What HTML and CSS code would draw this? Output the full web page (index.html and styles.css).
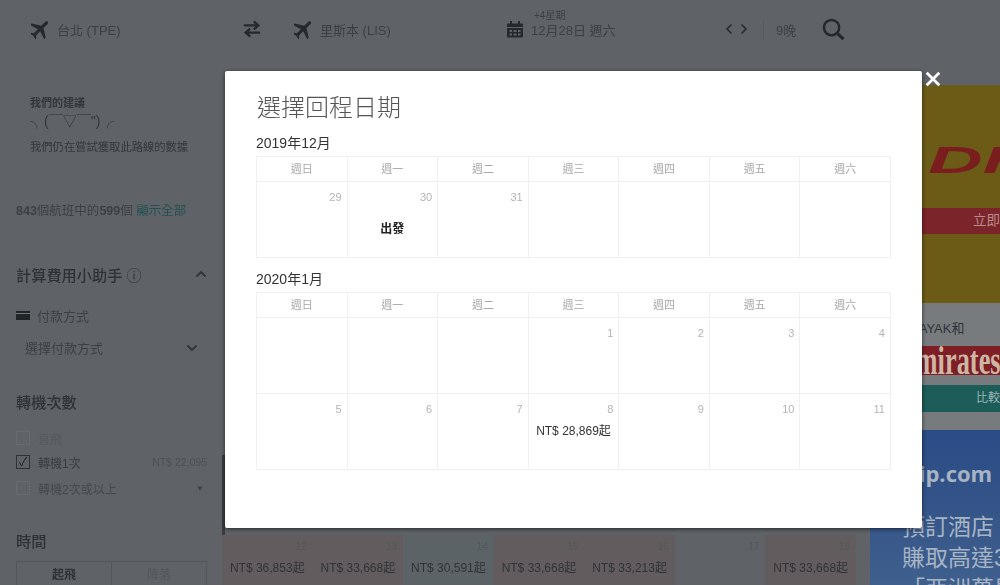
FILE: index.html
```html
<!DOCTYPE html>
<html lang="zh-Hant">
<head>
	<meta charset="UTF-8">
	<meta name="viewport" content="width=device-width, initial-scale=1.0">
	<title>選擇回程日期</title>
	<link rel="stylesheet" href="styles.css">
</head>
<body>
	<div class="page">
		<header class="topbar">
			<div class="place">
				<svg class="icon plane" viewBox="3 3 18 18"><path d="M21 16v-2l-8-5V3.500c0-.83-.67-1.500-1.500-1.500S10 2.670 10 3.500V9l-8 5v2l8-2.500V19l-2 1.500V22l3.500-1 3.500 1v-1.500L13 19v-5.500l8 2.500z" transform="rotate(45 12 12)"/></svg>
				<span>台北 (TPE)</span>
			</div>
			<div class="swap">
				<svg class="icon" viewBox="0 0 20 20"><path class="line" d="M1 6h16M12 1.500 17 6l-5 4.500M19 14H3M8 9.500 3 14l5 4.500"/></svg>
			</div>
			<div class="place">
				<svg class="icon plane" viewBox="3 3 18 18"><path d="M21 16v-2l-8-5V3.500c0-.83-.67-1.500-1.500-1.500S10 2.670 10 3.500V9l-8 5v2l8-2.500V19l-2 1.500V22l3.500-1 3.500 1v-1.500L13 19v-5.500l8 2.500z" transform="rotate(45 12 12)"/></svg>
				<span>里斯本 (LIS)</span>
			</div>
			<div class="date">
				<svg class="icon" viewBox="0 0 18 18"><path d="M1 4.500c0-.6.400-1 1-1h2V1h2v2.500h6V1h2v2.500h2c.6 0 1 .4 1 1V7H1zM1 8h16v8.500c0 .6-.4 1-1 1H2c-.6 0-1-.4-1-1zm2.500 2v2h2.500v-2zm4 0v2h3v-2zm4.500 0v2h2.500v-2zm-8.500 3.500v2h2.500v-2zm4 0v2h3v-2zm4.500 0v2h2.500v-2z" fill-rule="evenodd"/></svg>
				<div class="date-text">
					<small>+4星期</small>
					<span>12月28日 週六</span>
				</div>
			</div>
			<div class="arrows">
				<svg class="chev" viewBox="0 0 8 12"><path class="thin" d="M6.500 1.500 2 6l4.500 4.500"/></svg>
				<svg class="chev" viewBox="0 0 8 12"><path class="thin" d="M1.500 1.500 6 6l-4.500 4.500"/></svg>
			</div>
			<div class="nights">9晚</div>
			<svg class="search" viewBox="0 0 24 24"><circle class="line" cx="10" cy="10" r="8"/><path class="line heavy" d="m16 16 6.500 6"/></svg>
		</header>

		<div class="layout">
			<aside class="sidebar">
				<div class="advice">
					<div class="advice-title">我們的建議</div>
					<div class="kaomoji">╮(￣▽￣")╭</div>
					<div>我們仍在嘗試獲取此路線的數據</div>
				</div>
				<div class="count"><b>843</b>個航班中的<b>599</b>個 <a>顯示全部</a></div>

				<div class="heading first">
					<span>計算費用小助手 <i>ⓘ</i></span>
					<svg class="fold" viewBox="0 0 12 8"><path class="thick" d="M1.500 6.500 6 2l4.500 4.500"/></svg>
				</div>
				<div class="pay"><span class="card"></span>付款方式</div>
				<div class="select">
					<span>選擇付款方式</span>
					<svg class="fold" viewBox="0 0 12 8"><path class="thick" d="M1.500 1.500 6 6l4.500-4.500"/></svg>
				</div>

				<div class="heading stops">轉機次數</div>
				<div class="check off"><span class="box"></span>直飛</div>
				<div class="check"><span class="box on">✓</span>轉機1次<em>NT$ 22,095</em></div>
				<div class="check mid"><span class="box"></span>轉機2次或以上<em class="pin">▼</em></div>

				<div class="heading time">時間</div>
				<div class="tabs">
					<div class="tab active">起飛</div>
					<div class="tab">降落</div>
				</div>
			</aside>

			<main class="main">
				<div class="grid-edge"></div>
				<div class="strip">
					<div class="day tone-a"><span>12</span>NT$ 36,853起</div>
					<div class="day tone-a"><span>13</span>NT$ 33,668起</div>
					<div class="day tone-b"><span>14</span>NT$ 30,591起</div>
					<div class="day tone-a"><span>15</span>NT$ 33,668起</div>
					<div class="day tone-a"><span>16</span>NT$ 33,213起</div>
					<div class="day"><span>17</span></div>
					<div class="day tone-a"><span>18</span>NT$ 33,668起</div>
				</div>
			</main>

			<aside class="ads">
				<div class="ad-dhl">
					<div class="dhl-logo">DHL</div>
					<div class="dhl-btn">立即</div>
				</div>
				<div class="ad-kayak">
					<div class="kayak-text">KAYAK和</div>
					<div class="emirates"><span>Emirates</span></div>
					<div class="compare">比較</div>
				</div>
				<div class="ad-trip">
					<div class="trip-logo">Trip.com</div>
					<div class="trip-text">預訂酒店<br>賺取高達3<br>「亞洲萬里</div>
				</div>
			</aside>
		</div>
	</div>

	<div class="modal">
		<svg class="close" viewBox="0 0 14 14"><path d="M1.500 1.500l11 11M12.500 1.500l-11 11"/></svg>
		<h1>選擇回程日期</h1>

		<h2>2019年12月</h2>
		<div class="cal">
			<div class="wd">週日</div><div class="wd">週一</div><div class="wd">週二</div><div class="wd">週三</div><div class="wd">週四</div><div class="wd">週五</div><div class="wd">週六</div>
			<div class="cell"><span>29</span></div>
			<div class="cell"><span>30</span><b>出發</b></div>
			<div class="cell"><span>31</span></div>
			<div class="cell"></div><div class="cell"></div><div class="cell"></div><div class="cell"></div>
		</div>

		<h2 class="second">2020年1月</h2>
		<div class="cal">
			<div class="wd">週日</div><div class="wd">週一</div><div class="wd">週二</div><div class="wd">週三</div><div class="wd">週四</div><div class="wd">週五</div><div class="wd">週六</div>
			<div class="cell"></div><div class="cell"></div><div class="cell"></div>
			<div class="cell"><span>1</span></div>
			<div class="cell"><span>2</span></div>
			<div class="cell"><span>3</span></div>
			<div class="cell"><span>4</span></div>
			<div class="cell"><span>5</span></div>
			<div class="cell"><span>6</span></div>
			<div class="cell"><span>7</span></div>
			<div class="cell"><span>8</span><p>NT$ 28,869起</p></div>
			<div class="cell"><span>9</span></div>
			<div class="cell"><span>10</span></div>
			<div class="cell"><span>11</span></div>
		</div>
	</div>
</body>
</html>
```

FILE: styles.css
```css
body {
	margin: 0;
	height: 585px;
	overflow: hidden;
	background: #5f6367;
	color: #303336;
	font-family: 'Liberation Sans', 'Noto Sans CJK TC', sans-serif;
	font-size: 13px;
}
svg {
	display: block;
	flex: none;
}
.page {
	height: 585px;
	display: flex;
	flex-direction: column;
	filter: blur(.6px);
}
.line, .thin, .thick {
	fill: none;
	stroke: #26292c;
	stroke-width: 2.6;
}
.thin {
	stroke-width: 1.5;
}
.thick {
	stroke: #303336;
	stroke-width: 1.8;
}
.heavy {
	stroke-width: 3.4;
}

/* top bar */
.topbar {
	height: 60px;
	padding: 0 0 2px 31px;
	box-sizing: border-box;
	display: flex;
	align-items: center;
	flex: none;
}
.icon {
	width: 18px;
	height: 18px;
	fill: #26292c;
}
.plane {
	width: 19px;
	height: 19px;
}
.place {
	width: 212px;
	display: flex;
	align-items: center;
	gap: 7px;
	color: #3c4043;
}
.swap {
	width: 51px;
}
.date {
	width: 219px;
	display: flex;
	align-items: center;
	gap: 7px;
	color: #3c4043;
}
.date-text {
	position: relative;
}
.date-text small {
	position: absolute;
	left: 3px;
	top: -13px;
	font-size: 10px;
	white-space: nowrap;
}
.arrows {
	width: 38px;
	display: flex;
	gap: 7px;
}
.chev {
	width: 8px;
	height: 12px;
}
.nights {
	width: 46px;
	padding-left: 12px;
	border-left: 1px solid #585c60;
	color: #3c4043;
}
.search {
	width: 23px;
	height: 23px;
}

/* columns under the top bar */
.layout {
	flex: 1;
	display: flex;
	min-height: 0;
}
.sidebar {
	width: 191px;
	padding-left: 16px;
	flex: none;
}
.advice {
	margin: 34px 0 0 14px;
	font-size: 11.3px;
	color: #33363a;
}
.advice-title {
	font-size: 11px;
	font-weight: bold;
}
.kaomoji {
	margin: 1px 0 6px 0;
	font-size: 14px;
	line-height: 21px;
	white-space: nowrap;
}
.count {
	margin-top: 46px;
	font-size: 12.5px;
	white-space: nowrap;
	color: #3c4043;
}
.count a {
	color: #23504f;
}
.heading {
	font-size: 15.2px;
	font-weight: 500;
	display: flex;
	justify-content: space-between;
	align-items: center;
	color: #2f3235;
}
.heading i {
	font-style: normal;
	font-weight: normal;
}
.fold {
	width: 12px;
	height: 8px;
}
.first {
	margin-top: 44px;
}
.pay {
	margin-top: 21px;
	display: flex;
	align-items: center;
	gap: 7px;
	color: #3c4043;
}
.card {
	width: 14px;
	height: 7px;
	background: #222528;
	border-top: 2px solid #222528;
	box-shadow: inset 0 1px 0 #777;
}
.select {
	margin: 13px 9px 0 9px;
	display: flex;
	justify-content: space-between;
	align-items: center;
	color: #3c4043;
}
.stops {
	margin-top: 33px;
}
.check {
	margin-top: 6px;
	height: 18px;
	display: flex;
	align-items: center;
	gap: 8px;
	font-size: 12px;
	color: #393c40;
}
.off {
	margin-top: 17px;
	color: #55595c;
}
.mid {
	margin-top: 8px;
	color: #45494c;
}
.box {
	width: 12px;
	height: 12px;
	border: 1px solid #686c70;
	color: #222;
	font-size: 12px;
	line-height: 12px;
	text-align: center;
}
.box.on {
	border-color: #303336;
}
.check em {
	margin-left: auto;
	font-style: normal;
	font-size: 10.5px;
	color: #4c5053;
}
.check .pin {
	margin-right: 3px;
	font-size: 8px;
	color: #3c4043;
}
.time {
	margin-top: 32px;
}
.tabs {
	margin-top: 10px;
	height: 23px;
	display: flex;
	border: 1px solid #53575b;
	border-bottom: none;
}
.tab {
	flex: 1;
	text-align: center;
	padding-top: 4px;
	line-height: 19px;
	color: #53575b;
	font-size: 12px;
}
.active {
	color: #2f3235;
	font-weight: bold;
	border-right: 1px solid #53575b;
}
.main {
	width: 648px;
	margin-left: 15px;
	display: flex;
	flex-direction: column;
	justify-content: flex-end;
}
.grid-edge {
	width: 3px;
	height: 80px;
	background: #3a3d40;
}
.strip {
	width: 634px;
	display: grid;
	grid-template-columns: repeat(7, 1fr);
}
.day {
	height: 50px;
	box-sizing: border-box;
	padding-top: 6px;
	text-align: center;
	font-size: 12px;
	color: #303336;
	white-space: nowrap;
}
.day span {
	display: block;
	height: 17px;
	padding-right: 6px;
	text-align: right;
	font-size: 10px;
	color: #53575a;
}
.tone-a {
	background: #635c5f;
}
.tone-b {
	background: #5b6367;
}

/* ad column */
.ads {
	flex: 1;
	display: flex;
	flex-direction: column;
	margin-top: 25px;
	overflow: hidden;
}
.ad-dhl {
	height: 218px;
	flex: none;
	background: #6b5b17;
	overflow: hidden;
}
.dhl-logo {
	margin: 58px 0 0 58px;
	font-size: 36px;
	line-height: 36px;
	font-weight: bold;
	font-style: italic;
	color: #7a1d1e;
	white-space: nowrap;
	transform: scaleX(2.1);
	transform-origin: left;
}
.dhl-btn {
	margin-top: 29px;
	height: 26px;
	background: #7b2429;
	color: #b98a8e;
	font-size: 13.5px;
	line-height: 25px;
	padding-left: 103px;
	white-space: nowrap;
}
.ad-kayak {
	height: 127px;
	flex: none;
	background: #777b7e;
	overflow: hidden;
}
.kayak-text {
	margin: 17px 0 0 40px;
	font-size: 13px;
	line-height: 18px;
	color: #303336;
}
.emirates {
	margin-top: 8px;
	height: 29px;
	background: #7d1f25;
	overflow: hidden;
	padding-left: 28px;
	white-space: nowrap;
}
.emirates span {
	display: inline-block;
	color: #cdb6a4;
	font-family: 'Liberation Serif', serif;
	font-weight: bold;
	font-size: 40px;
	line-height: 29px;
	transform: scaleX(.66);
	transform-origin: left;
}
.compare {
	margin-top: 10px;
	height: 27px;
	background: #1c5c59;
	color: #9fb6b6;
	font-size: 12px;
	line-height: 27px;
	padding-left: 106px;
}
.ad-trip {
	flex: 1;
	background: linear-gradient(to bottom, #2a4b85, #3f5f8d);
	overflow: hidden;
	color: #a6b4c4;
}
.trip-logo {
	margin: 28px 0 0 26px;
	font-family: 'Open Sans', sans-serif;
	font-weight: bold;
	font-size: 22px;
	line-height: 30px;
}
.trip-text {
	padding: 24px 0 0 32px;
	font-size: 23px;
	line-height: 31px;
	white-space: nowrap;
}

/* dialog on top of the page */
.modal {
	position: absolute;
	left: 225px;
	top: 71px;
	width: 697px;
	height: 457px;
	box-sizing: border-box;
	padding: 23px 31px 0 32px;
	background: #fff;
	border-radius: 2px;
	box-shadow: 0 1px 4px rgba(0, 0, 0, .6);
	filter: blur(.35px);
}
.close {
	position: absolute;
	left: 700px;
	top: 0;
	width: 16px;
	height: 16px;
}
.close path {
	fill: none;
	stroke: #fff;
	stroke-width: 2.4;
}
.modal h1 {
	margin: 0;
	font-size: 24px;
	line-height: 28px;
	font-weight: 300;
	color: #555;
}
.modal h2 {
	margin: 9px 0 0 -1px;
	font-size: 14px;
	line-height: 24px;
	font-weight: normal;
	color: #333;
}
.modal h2.second {
	margin-top: 9px;
}
.cal {
	display: grid;
	grid-template-columns: repeat(7, 1fr);
	border: 1px solid #f0f0f0;
	border-right: none;
	border-bottom: none;
	box-sizing: border-box;
	width: 635px;
	margin-left: -1px;
	margin-top: 1px;
}
.wd {
	height: 25px;
	box-sizing: border-box;
	border-right: 1px solid #f0f0f0;
	border-bottom: 1px solid #f0f0f0;
	text-align: center;
	font-size: 11px;
	line-height: 25px;
	color: #a8a8a8;
}
.cell {
	height: 76px;
	box-sizing: border-box;
	padding: 8px 5px 0 0;
	border-right: 1px solid #f0f0f0;
	border-bottom: 1px solid #f0f0f0;
	text-align: center;
}
.cell span {
	display: block;
	text-align: right;
	font-size: 11px;
	line-height: 14px;
	color: #b4b4b4;
}
.cell b {
	display: block;
	margin: 17px -5px 0 0;
	font-size: 12px;
	line-height: 16px;
	color: #222;
}
.cell p {
	margin: 7px -5px 0 0;
	font-size: 12px;
	line-height: 16px;
	color: #333;
	white-space: nowrap;
}
```
